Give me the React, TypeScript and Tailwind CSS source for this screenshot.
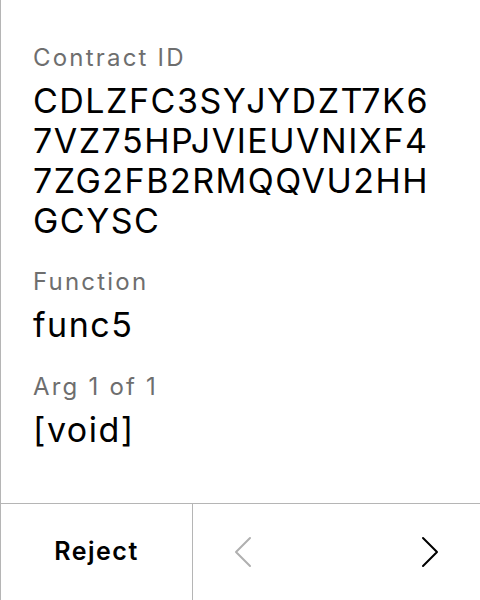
import React from 'react';

const contractLines = ['CDLZFC3SYJYDZT7K6', '7VZ75HPJVIEUVNIXF4', '7ZG2FB2RMQQVU2HH', 'GCYSC'];

const Field: React.FC<{ label: string; children: React.ReactNode; className?: string }> = ({ label, children, className }) => (
  <div className={className}>
    <div className="text-[24px] leading-[30px] tracking-[2.2px] text-[#6e6e6e]">{label}</div>
    <div className="mt-[8px] text-[34px] leading-[40px] tracking-[1.5px] text-black">{children}</div>
  </div>
);

const Chevron: React.FC<{ dir: 'left' | 'right'; color: string }> = ({ dir, color }) => (
  <svg width="18" height="32" viewBox="0 0 18 32" fill="none">
    <polyline
      points={dir === 'left' ? '16,2 2,16 16,30' : '2,2 16,16 2,30'}
      stroke={color}
      strokeWidth="2"
      strokeLinecap="round"
      strokeLinejoin="round"
    />
  </svg>
);

export default function App() {
  return (
    <div
      className="w-[480px] h-[600px] bg-white border-l border-[#b5b5b5] flex flex-col"
      style={{ fontFamily: 'Inter, "Noto Sans", sans-serif' }}
    >
      <div className="flex-1 px-8 pt-[43px]">
        <Field label="Contract ID">
          {contractLines.map((line) => (
            <span key={line} className="block">{line}</span>
          ))}
        </Field>
        <Field label="Function" className="mt-[26px]">func5</Field>
        <Field label="Arg 1 of 1" className="mt-[27px]">[void]</Field>
      </div>
      <div className="h-[97px] border-t border-[#b5b5b5] flex">
        <button className="w-[192px] border-r border-[#b5b5b5] flex items-center justify-center text-[25px] font-semibold tracking-[1.5px] text-black">
          Reject
        </button>
        <div className="flex-1 flex items-center justify-between px-[41px]">
          <Chevron dir="left" color="#b0b0b0" />
          <Chevron dir="right" color="#000000" />
        </div>
      </div>
    </div>
  );
}
